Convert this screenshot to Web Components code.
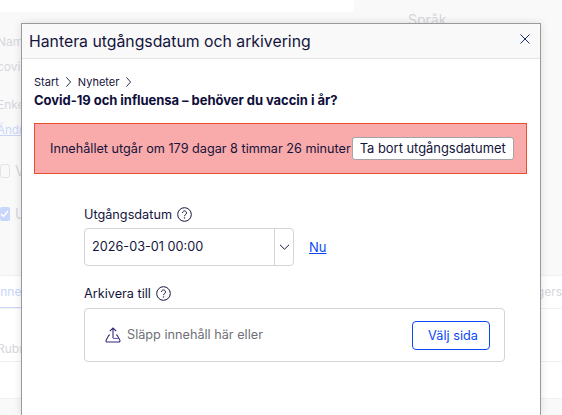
<!DOCTYPE html>
<html>
<head>
<meta charset="utf-8">
<title>Hantera utgångsdatum</title>
<style>
  html, body { margin: 0; height: 100%; overflow: hidden; }
  body { font-family: Inter, "Liberation Sans", sans-serif; color: #14143c; background: #f9f9fa; }
</style>
</head>
<body>
<page-backdrop></page-backdrop>
<expiry-dialog heading="Hantera utgångsdatum och arkivering">
  <bread-crumbs title-text="Covid-19 och influensa – behöver du vaccin i år?"></bread-crumbs>
  <expiry-alert>Innehållet utgår om 179 dagar 8 timmar 26 minuter</expiry-alert>
  <div slot="fields">
    <date-field label="Utgångsdatum" value="2026-03-01 00:00"></date-field>
    <drop-field label="Arkivera till"></drop-field>
  </div>
</expiry-dialog>

<script>
const helpIcon = `<svg width="15" height="15" viewBox="0 0 15 15" fill="none" stroke="currentColor" stroke-width="1"><circle cx="7.500" cy="7.500" r="6.800"/><path d="M5.500 5.900a2 2 0 1 1 3.100 1.700c-.7.4-1.100.8-1.100 1.600"/><path d="M7.500 10.400v1.100" stroke-width="1.200"/></svg>`;

// the dimmed page behind the dialog, only its edges show
class PageBackdrop extends HTMLElement {
  constructor() {
    super();
    this.attachShadow({mode: 'open'}).innerHTML = `
      <style>
        :host { display: block; height: 415px; overflow: hidden; color: #d6d6dd; font-size: 12px; line-height: 18px; }
        .strip { width: 21px; overflow: hidden; white-space: nowrap; }
        .top { width: 354px; height: 12px; background: #fff; border-bottom-right-radius: 4px; }
        .form { display: flex; justify-content: space-between; height: 263px; }
        .form .strip { padding-top: 21px; }
        .form .strip > div { height: 18px; }
        .nudge { margin-left: -3px; }
        .lang { width: 154px; font-size: 14px; margin-top: -1px; }
        .link { color: #c9d6fb; font-size: 11.500px; text-decoration: underline; }
        .opt { display: flex; gap: 5px; align-items: center; font-size: 14px; }
        .box { flex: none; width: 8px; height: 12px; border: 1px solid #e2e2e6; border-radius: 3px; }
        .check { flex: none; display: flex; align-items: center; width: 10px; height: 14px; background: #c9d6fb; border-radius: 2px; }
        .table { background: #fff; border-top: 1px solid #f0f0f3; }
        .row { display: flex; justify-content: space-between; border-bottom: 1px solid #f0f0f3; }
        .right { display: flex; justify-content: flex-end; width: 22px; overflow: hidden; white-space: nowrap; }
        .tabs { height: 32px; align-items: center; }
        .tabs .strip { height: 32px; line-height: 32px; box-shadow: inset 0 -1px 0 #c9d6fb; color: #c9d6fb; }
      </style>
      <div class="top"></div>
      <div class="form">
        <div class="strip">
          <div class="nudge">Nam</div>
          <div class="nudge" style="margin-top:7px">covid</div>
          <div class="nudge" style="margin-top:20px">Enkel</div>
          <div class="link nudge" style="margin-top:7px">Ändra</div>
          <div class="opt" style="margin-top:23px"><span class="box"></span><span>V</span></div>
          <div class="opt" style="margin-top:25px"><span class="check"><svg width="9" height="8" viewBox="0 0 9 8" fill="none" stroke="#fff" stroke-width="1.500"><path d="M1 4l2.500 2.500L8 1"/></svg></span><span>U</span></div>
        </div>
        <div class="lang">Språk</div>
      </div>
      <div class="table">
        <div class="row tabs"><div class="strip"><div class="nudge">Inne</div></div><div class="right">gers</div></div>
        <div class="row" style="height:52px"><div class="strip" style="padding-top:31px"><div class="nudge">Rubr</div></div></div>
        <div class="row" style="height:36px"></div>
      </div>`;
  }
}

class ExpiryDialog extends HTMLElement {
  constructor() {
    super();
    this.attachShadow({mode: 'open'}).innerHTML = `
      <style>
        :host { display: block; position: absolute; left: 21px; top: 23px; bottom: 0; width: 518px; background: #fff; border: 1px solid #9a9a9a; border-bottom: 0; box-shadow: 0 0 8px rgba(0,0,0,.12); }
        header { display: flex; align-items: center; justify-content: space-between; height: 34px; padding: 0 10px 0 7px; background: #f9f9fa; border-bottom: 1px solid #e2e2e6; font-size: 15.8px; }
        button { all: unset; display: flex; color: #14143c; margin-bottom: 4px; }
        .body { padding: 16px 13px 0 12px; }
        .fields { padding: 0 21px 0 50px; margin-top: 32px; }
      </style>
      <header>
        <span id="h"></span>
        <button aria-label="Stäng"><svg width="10" height="10" viewBox="0 0 10 10" fill="none" stroke="#1c2a70" stroke-width="1"><path d="M.5.5l9 9M9.500.5l-9 9"/></svg></button>
      </header>
      <div class="body">
        <slot></slot>
        <div class="fields"><slot name="fields"></slot></div>
      </div>`;
    this.shadowRoot.getElementById('h').textContent = this.getAttribute('heading');
  }
}

class BreadCrumbs extends HTMLElement {
  constructor() {
    super();
    this.attachShadow({mode: 'open'}).innerHTML = `
      <style>
        :host { display: block; font-size: 11px; }
        .path { display: flex; align-items: center; gap: 7px; height: 14px; }
        svg { flex: none; }
        h2 { margin: 3px 0 0; font-size: 13px; font-weight: 700; letter-spacing: -.04px; line-height: 16px; color: #0e0e3a; }
      </style>
      <div class="path">
        <span>Start</span><svg width="5" height="10" viewBox="0 0 5 10" fill="none" stroke="currentColor" stroke-width=".9"><path d="M.4.400 4.600 5 .4 9.600"/></svg>
        <span>Nyheter</span><svg width="5" height="10" viewBox="0 0 5 10" fill="none" stroke="currentColor" stroke-width=".9"><path d="M.4.400 4.600 5 .4 9.600"/></svg>
      </div>
      <h2 id="t"></h2>`;
    this.shadowRoot.getElementById('t').textContent = this.getAttribute('title-text');
  }
}

class ExpiryAlert extends HTMLElement {
  constructor() {
    super();
    this.attachShadow({mode: 'open'}).innerHTML = `
      <style>
        :host { display: flex; align-items: center; margin-top: 15px; height: 49px; padding: 0 15px 0 15px; background: #f9aaaa; border: 1px solid #e8502e; font-size: 12.66px; white-space: nowrap; }
        button { all: unset; margin-left: 1px; height: 21px; line-height: 21px; padding: 0 7px; background: #fff; border: 1px solid #a4a4a8; border-radius: 3px; font-size: 12.9px; }
      </style>
      <slot></slot><button>Ta bort utgångsdatumet</button>`;
  }
}

class DateField extends HTMLElement {
  constructor() {
    super();
    this.attachShadow({mode: 'open'}).innerHTML = `
      <style>
        :host { display: block; font-size: 12.7px; }
        label { display: flex; align-items: center; gap: 5px; height: 16px; }
        .row { display: flex; align-items: center; margin-top: 6px; }
        .select { display: flex; width: 208px; height: 36px; border: 1px solid #d4d4d8; border-radius: 4px; }
        .val { flex: 1; display: flex; align-items: center; padding: 0 0 2px 7px; }
        .arrow { width: 18px; display: flex; align-items: center; justify-content: center; border-left: 1px solid #d4d4d8; }
        a { margin-left: 15px; color: #0b49f5; text-decoration: underline; font-size: 13px; }
      </style>
      <label><span id="l"></span>${helpIcon}</label>
      <div class="row">
        <div class="select"><span class="val" id="v"></span><span class="arrow"><svg width="11" height="6" viewBox="0 0 11 6" fill="none" stroke="currentColor"><path d="M1 .8l4.500 4.400L10 .8"/></svg></span></div>
        <a href="#">Nu</a>
      </div>`;
    this.shadowRoot.getElementById('l').textContent = this.getAttribute('label');
    this.shadowRoot.getElementById('v').textContent = this.getAttribute('value');
  }
}

class DropField extends HTMLElement {
  constructor() {
    super();
    this.attachShadow({mode: 'open'}).innerHTML = `
      <style>
        :host { display: block; font-size: 12.7px; margin-top: 19px; }
        label { display: flex; align-items: center; gap: 5px; height: 16px; }
        .zone { display: flex; align-items: center; height: 52px; margin-top: 7px; width: 385px; padding: 0 14px 0 20px; border: 1px solid #d4d4d8; border-radius: 4px; }
        svg.up { margin-right: 6px; }
        .hint { flex: 1; color: #6f6f78; padding-bottom: 2px; }
        button { all: unset; width: 76px; height: 27px; line-height: 27px; text-align: center; text-indent: 4px; border: 1px solid #0b49f5; border-radius: 4px; color: #0b49f5; font-size: 12.7px; }
      </style>
      <label><span id="l"></span>${helpIcon}</label>
      <div class="zone">
        <svg class="up" width="16" height="16" viewBox="0 0 16 16" fill="none" stroke="#34287a" stroke-width="1.100"><path d="M8 11V1M4.800 4.200 8 1l3.200 3.200"/><path d="M5 8H4L1.200 13a1.300 1.300 0 0 0 1.200 2h11.200a1.300 1.300 0 0 0 1.200-2L12 8h-1"/><path d="M8 11.500h5.500" stroke="#6a5fc0"/></svg>
        <span class="hint">Släpp innehåll här eller</span>
        <button>Välj sida</button>
      </div>`;
    this.shadowRoot.getElementById('l').textContent = this.getAttribute('label');
  }
}

customElements.define('page-backdrop', PageBackdrop);
customElements.define('expiry-dialog', ExpiryDialog);
customElements.define('bread-crumbs', BreadCrumbs);
customElements.define('expiry-alert', ExpiryAlert);
customElements.define('date-field', DateField);
customElements.define('drop-field', DropField);
</script>
</body>
</html>
